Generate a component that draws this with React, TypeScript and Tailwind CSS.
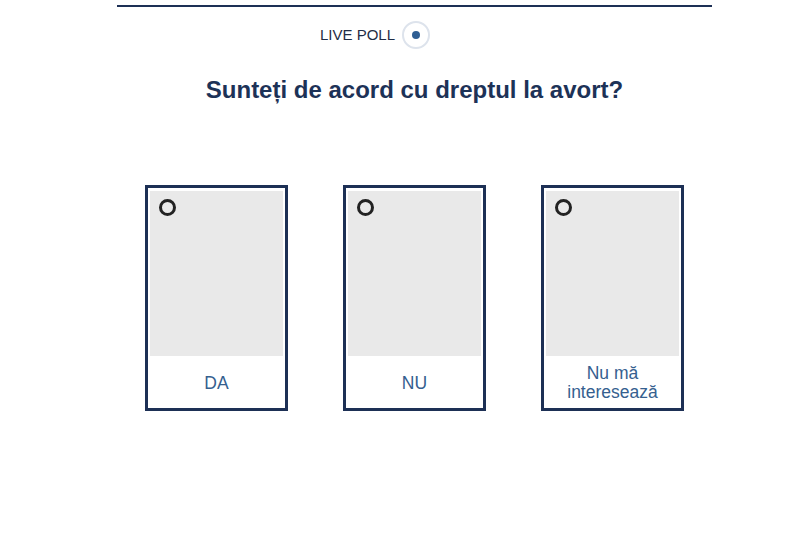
const options = [
  { id: 'da', label: 'DA' },
  { id: 'nu', label: 'NU' },
  { id: 'ni', label: 'Nu mă interesează' },
]

function OptionCard({ label }: { label: string }) {
  return (
    <div className="w-[143px] h-[226px] border-[3px] border-[#1d3055] pt-[3px] px-[2px] pb-[2px] flex flex-col bg-white">
      <div className="relative h-[165px] bg-[#e9e9e9]">
        <span className="absolute left-[9px] top-[8px] w-[17px] h-[17px] rounded-full border-[3px] border-[#222222]" />
      </div>
      <div className="flex-1 flex items-center justify-center px-2 pt-[4px] text-center text-[17.5px] leading-[19px] text-[#35608f]">
        {label}
      </div>
    </div>
  )
}

export default function App() {
  return (
    <div className="w-[800px] h-[538px] bg-white font-['Liberation_Sans',Arial,sans-serif]">
      <div className="ml-[117px] w-[595px]">
        <div className="h-[5px]" />
        <div className="h-[2px] bg-[#1d3055]" />

        {/* Live poll badge */}
        <div className="mt-[14px] pl-[203px] flex items-center gap-[7px]">
          <span className="text-[15px] text-[#1f2c45]">LIVE POLL</span>
          <span className="w-[28px] h-[28px] rounded-full border-2 border-[#dde3ec] flex items-center justify-center">
            <span className="w-[8px] h-[8px] rounded-full bg-[#2f5e93]" />
          </span>
        </div>

        {/* Question */}
        <h1 className="mt-[27px] text-center text-[24px] leading-[28px] font-bold text-[#1d3257]">
          Sunteți de acord cu dreptul la avort?
        </h1>

        {/* Options */}
        <div className="mt-[81px] flex justify-center gap-[55px]">
          {options.map((o) => (
            <OptionCard key={o.id} label={o.label} />
          ))}
        </div>
      </div>
    </div>
  )
}
